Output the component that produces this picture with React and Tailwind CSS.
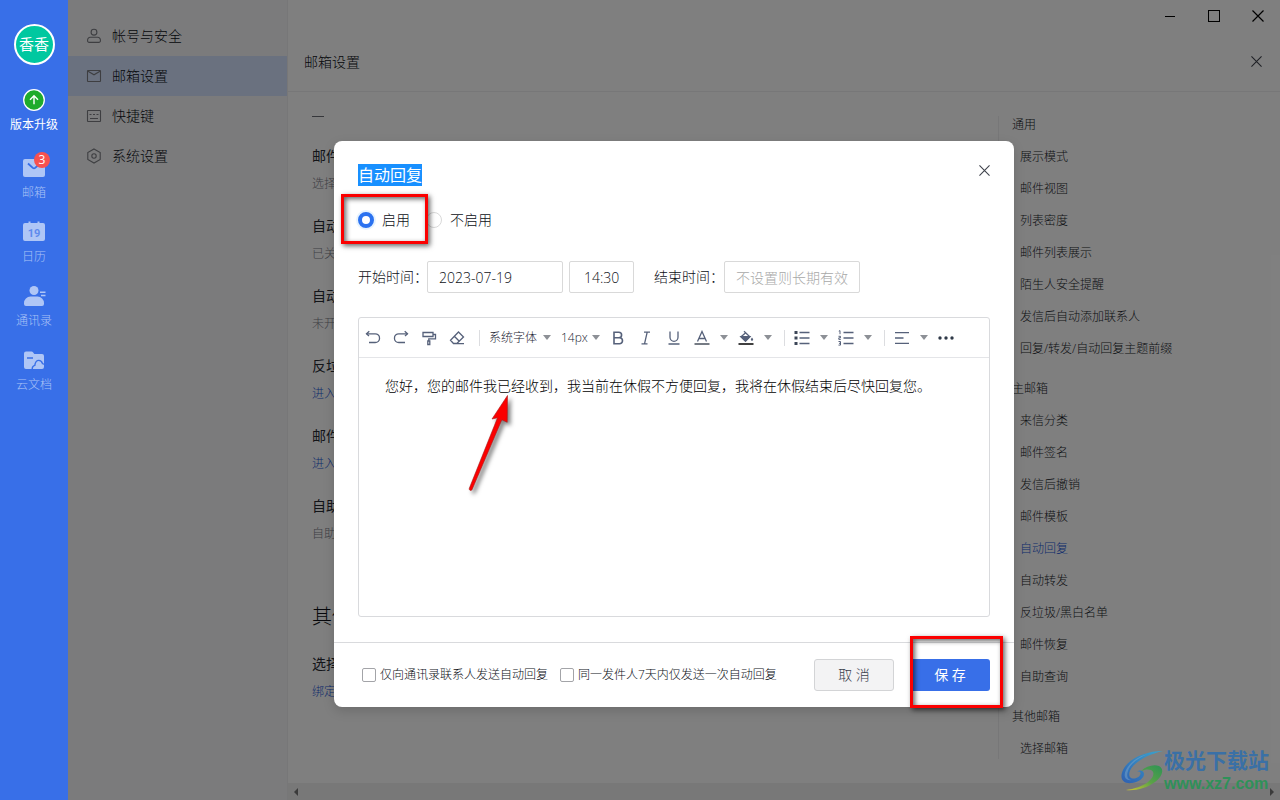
import React from "react";

const SIDE_MENU = [
  { label: "帐号与安全", icon: "user" },
  { label: "邮箱设置", icon: "mail", active: true },
  { label: "快捷键", icon: "keyboard" },
  { label: "系统设置", icon: "hex" },
];

const SETTINGS = [
  { label: "邮件模板", desc: "选择模板" },
  { label: "自动回复", desc: "已关闭" },
  { label: "自动转发", desc: "未开启" },
  { label: "反垃圾/黑白名单", desc: "进入设置", link: true },
  { label: "邮件恢复", desc: "进入设置", link: true },
  { label: "自助查询", desc: "自助查询" },
];

const ANCHORS = [
  {
    title: "通用",
    items: ["展示模式", "邮件视图", "列表密度", "邮件列表展示", "陌生人安全提醒", "发信后自动添加联系人", "回复/转发/自动回复主题前缀"],
  },
  {
    title: "主邮箱",
    items: ["来信分类", "邮件签名", "发信后撤销", "邮件模板", "自动回复", "自动转发", "反垃圾/黑白名单", "邮件恢复", "自助查询"],
  },
  { title: "其他邮箱", items: ["选择邮箱"] },
];

function MenuIcon({ name }) {
  return (
    <svg className="size-4 shrink-0" viewBox="0 0 16 16" fill="none" stroke="#7c7d83" strokeWidth="1.1">
      {name === "user" && (
        <>
          <circle cx="8" cy="4.2" r="2.9" />
          <path d="M4.2 9.3h7.6a2.6 2.6 0 0 1 2.6 2.6v1a1.5 1.5 0 0 1-1.5 1.5H3.1a1.5 1.5 0 0 1-1.5-1.5v-1a2.6 2.6 0 0 1 2.6-2.6z" />
        </>
      )}
      {name === "mail" && (
        <>
          <rect x="1.5" y="2.5" width="13" height="11" rx="0.5" />
          <path d="M2 3.2l6 3.600L14 3.200" />
        </>
      )}
      {name === "keyboard" && (
        <>
          <rect x="1.5" y="2.5" width="13" height="11" rx="0.5" />
          <path d="M3.500 6.500h2M7 6.500h2M10.500 6.500h2M4 10.500h8" />
        </>
      )}
      {name === "hex" && (
        <>
          <path d="M8 1l6.200 3.500v7L8 15l-6.200-3.500v-7z" />
          <circle cx="8" cy="8" r="2.200" />
        </>
      )}
    </svg>
  );
}

function Cross({ className }) {
  return (
    <svg className={className} viewBox="0 0 12 12" fill="none" stroke="currentColor" strokeWidth="1.2">
      <path d="M0.500 0.500l11 11M11.500 0.500l-11 11" />
    </svg>
  );
}

function RailItem({ label, children }) {
  return (
    <a href="#" className="relative flex flex-col items-center gap-[5px] text-[#a9c2f6]">
      <svg className="size-6" viewBox="0 0 24 24">{children}</svg>
      <span className="text-xs leading-4">{label}</span>
    </a>
  );
}

function Rail() {
  return (
    <nav className="flex w-[68px] shrink-0 flex-col items-center bg-[#386fe8] pt-6">
      <button className="flex size-[41px] items-center justify-center rounded-full border-2 border-white bg-[#00c8a0] text-[15px] font-normal text-white">
        香香
      </button>
      <a href="#" className="mt-[23px] flex flex-col items-center gap-[5px] text-white">
        <svg className="size-6" viewBox="0 0 24 24" fill="none" stroke="#fff">
          <circle cx="12" cy="12" r="10.300" fill="#1fab2c" strokeWidth="1.300" />
          <path d="M12 16.300V8M8 11.800l4-4 4 4" strokeWidth="1.400" />
        </svg>
        <span className="text-xs font-normal leading-4">版本升级</span>
      </a>
      <div className="mt-[23px] flex flex-col items-center gap-[19px]">
        <div className="relative">
          <RailItem label="邮箱">
            <rect x="1" y="3" width="22" height="18" rx="2" fill="#afc6f6" />
            <path d="M6 7.500l4.800 4.400a1.800 1.800 0 0 0 2.400 0L18 7.500" fill="none" stroke="#386fe8" strokeWidth="1.800" />
          </RailItem>
          <span className="absolute -right-1 -top-1 flex size-4 items-center justify-center rounded-full bg-[#f7514f] text-xs font-normal text-white">
            3
          </span>
        </div>
        <RailItem label="日历">
          <path d="M3 3h3.500V1.500h2V3h7V1.500h2V3H21a2 2 0 0 1 2 2v14a2 2 0 0 1-2 2H3a2 2 0 0 1-2-2V5a2 2 0 0 1 2-2z" fill="#afc6f6" />
          <text x="12" y="17" textAnchor="middle" fontSize="11" fontWeight="700" fontFamily="Roboto, sans-serif" fill="#5f8bed">
            19
          </text>
        </RailItem>
        <RailItem label="通讯录">
          <g fill="#afc6f6">
            <circle cx="12" cy="6.500" r="4.500" />
            <path d="M8.500 12.500h7A6.500 6.500 0 0 1 22 19v1a2 2 0 0 1-2 2H4a2 2 0 0 1-2-2v-1a6.500 6.500 0 0 1 6.500-6.500z" />
            <path d="M18 7.500h5.500V9H18zM19 10.700h4.500v1.500H19z" />
          </g>
        </RailItem>
        <RailItem label="云文档">
          <path d="M4 3.500h5.500a2 2 0 0 1 1.500.8l1.300 1.700H20a2 2 0 0 1 2 2v11a2 2 0 0 1-2 2H4a2 2 0 0 1-2-2v-13.500a2 2 0 0 1 2-2z" fill="#afc6f6" />
          <path d="M5 10h6M10.500 22c-.8-2 .2-4.200 2.300-4.600.4-3 2-5 4-5 2.400 0 3.200 1.500 3.700 3.200.8.100 1.500.500 2 1" fill="none" stroke="#386fe8" strokeWidth="1.400" />
        </RailItem>
      </div>
    </nav>
  );
}

function Caret() {
  return (
    <svg className="h-[5px] w-2" viewBox="0 0 8 5">
      <path d="M0 0h8L4 5z" fill="#8d9096" />
    </svg>
  );
}

function Tool({ label, children }) {
  return (
    <button aria-label={label} className="flex h-7 w-7 shrink-0 items-center justify-center">
      <svg className="size-4" viewBox="0 0 16 16" fill="none" stroke="#56617a" strokeWidth="1.300">
        {children}
      </svg>
    </button>
  );
}

function More({ label }) {
  return (
    <button aria-label={label} className="flex h-7 w-4 shrink-0 items-center justify-center">
      <Caret />
    </button>
  );
}

function Toolbar() {
  return (
    <div className="flex h-10 items-center border-b border-[#e4e5e8] text-xs text-[#1c2433]">
      <Tool label="撤销">
        <path d="M1.500 3.800h8.700a4.200 4.200 0 0 1 0 8.700H4" />
        <path d="M4.300 1.300L1.500 3.800l2.500 2.300" />
      </Tool>
      <Tool label="重做">
        <path d="M14.500 3.800H5.800a4.200 4.200 0 0 0 0 8.700H12" />
        <path d="M11.700 1.300l2.800 2.500-2.500 2.300" />
      </Tool>
      <Tool label="格式刷">
        <path d="M2 2.500h10v4H2zM12 4.500h2.500v4.300H7.800V11M6.800 11h2v3.500h-2z" />
      </Tool>
      <Tool label="清除格式">
        <path d="M9.500 2l5 5-6.700 6.500H4.500L1.500 10.300zM5.300 6.300l5 5M5 13.600h10" />
      </Tool>
      <span className="ml-2 mr-2 h-4 w-px bg-[#dcdde0]" />
      <span className="relative flex h-7 w-[72px] items-center">
        <select aria-label="字体" className="w-full appearance-none bg-transparent pl-px outline-none">
          <option>系统字体</option>
        </select>
        <span className="pointer-events-none absolute right-[9px]"><Caret /></span>
      </span>
      <span className="relative flex h-7 w-11 items-center">
        <select aria-label="字号" className="w-full appearance-none bg-transparent pl-px outline-none">
          <option>14px</option>
        </select>
        <span className="pointer-events-none absolute right-1"><Caret /></span>
      </span>
      <Tool label="加粗">
        <path d="M4 2.200h4.800a2.800 2.800 0 0 1 0 5.600H4zM4 7.800h5.500a3 3 0 0 1 0 6H4z" strokeWidth="1.600" />
      </Tool>
      <Tool label="斜体">
        <path d="M6 2.200h6M3.500 13.800h6M9.200 2.200L6.500 13.800" />
      </Tool>
      <Tool label="下划线">
        <path d="M4 1.500v5.800a4 4 0 0 0 8 0V1.500M2.500 14h11" />
      </Tool>
      <Tool label="文字颜色">
        <path d="M3.500 11.500L8 1.500l4.500 10M5 8.500h6" />
        <path d="M0.500 14h15" stroke="#2b3442" />
      </Tool>
      <More label="更多文字颜色" />
      <Tool label="背景颜色">
        <path d="M6 1.200l5.800 5.500L7.500 11 3 6.700 8 2.500" />
        <path d="M3 6.700h8.800L7.500 11z" fill="#56617a" />
        <path d="M14 7.500c.8 1 1.200 1.600 1.200 2.100a1.200 1.200 0 0 1-2.400 0c0-.500.400-1.100 1.200-2.100z" fill="#56617a" stroke="none" />
        <path d="M0.500 14h15" stroke="#111" strokeWidth="1.600" />
      </Tool>
      <More label="更多背景颜色" />
      <span className="ml-2 mr-[3px] h-4 w-px bg-[#dcdde0]" />
      <Tool label="无序列表">
        <path d="M5.500 2.500h10M5.500 8h10M5.500 13.500h10" />
        <path d="M0.500 1h3v3h-3zM0.500 6.500h3v3h-3zM0.500 12h3v3h-3z" fill="#3c4657" stroke="none" />
      </Tool>
      <More label="更多无序列表" />
      <Tool label="有序列表">
        <path d="M5.500 2.500h10M5.500 8h10M5.500 13.500h10" />
        <path d="M0.800 1.200l1.200-.6v3.600M0.500 6.300h2v1.500h-1.700v1.600h2M0.500 11.500h2v3.600h-2M1 13.300h1.500" strokeWidth="1" />
      </Tool>
      <More label="更多有序列表" />
      <span className="ml-2 mr-[3px] h-4 w-px bg-[#dcdde0]" />
      <Tool label="对齐">
        <path d="M1 2.700h14M1 8h8.500M1 13.300h14" />
      </Tool>
      <More label="更多对齐" />
      <Tool label="更多">
        <g fill="#2f3948" stroke="none">
          <circle cx="2" cy="8" r="1.700" />
          <circle cx="8" cy="8" r="1.700" />
          <circle cx="14" cy="8" r="1.700" />
        </g>
      </Tool>
    </div>
  );
}

const radioClass =
  "size-4 shrink-0 appearance-none rounded-full border border-[#d9d9d9] bg-white checked:border-4 checked:border-[#2b72f0] checked:ring-2 checked:ring-[#e6f3ff]";
const checkClass = "size-[14px] shrink-0 appearance-none rounded-[2px] border border-[#a3a4a8] bg-white";
const fieldClass = "h-8 rounded-[2px] border border-[#d9d9d9] bg-white text-sm outline-none placeholder:text-[#a8a8a8]";
const markClass =
  "pointer-events-none absolute border-[3px] border-[#fb0000] shadow-[2px_2px_5px_rgba(0,0,0,0.6),inset_2px_2px_5px_rgba(0,0,0,0.6)]";

function AutoReplyDialog() {
  return (
    <section role="dialog" aria-label="自动回复" className="relative w-[680px] rounded-lg bg-white text-sm text-[#0c0f16] shadow-[0_4px_12px_rgba(0,0,0,0.15)]">
      <div className="px-6 pt-[23px]">
        <header className="flex items-start justify-between">
          <h2 className="bg-[#1890ff] text-base font-normal leading-[22px] text-white">自动回复</h2>
          <button aria-label="关闭" className="-mr-1 -mt-1 flex size-5 items-center justify-center text-[#3f434c]">
            <Cross className="size-[11px]" />
          </button>
        </header>
        <div className="mt-[23px] flex h-[22px] items-center gap-4">
          <label className="flex items-center gap-2">
            <input type="radio" name="reply" defaultChecked className={radioClass} />启用
          </label>
          <label className="flex items-center gap-2">
            <input type="radio" name="reply" className={radioClass} />不启用
          </label>
        </div>
        <div className="mt-[30px] flex items-center whitespace-nowrap">
          <label htmlFor="start-date" className="w-[69px]">开始时间：</label>
          <input id="start-date" defaultValue="2023-07-19" className={fieldClass + " w-[136px] px-[11px]"} />
          <input aria-label="开始时刻" defaultValue="14:30" className={fieldClass + " ml-[6px] w-[65px] pl-[14px]"} />
          <label htmlFor="end-date" className="ml-5 w-[70px]">结束时间：</label>
          <input id="end-date" placeholder="不设置则长期有效" className={fieldClass + " w-[136px] px-[11px]"} />
        </div>
        <div className="mt-6 rounded-[3px] border border-[#d9dadd]">
          <Toolbar />
          <textarea
            aria-label="回复内容"
            defaultValue="您好，您的邮件我已经收到，我当前在休假不方便回复，我将在休假结束后尽快回复您。"
            className="block h-[258px] w-full resize-none bg-transparent px-[26px] pt-[17px] leading-[22px] text-black outline-none"
          />
        </div>
      </div>
      <footer className="mt-[25px] flex h-[65px] items-center justify-between border-t border-[#d9dadd] pl-7 pr-6">
        <div className="flex gap-3 text-xs">
          <label className="flex items-center gap-1">
            <input type="checkbox" className={checkClass} />仅向通讯录联系人发送自动回复
          </label>
          <label className="flex items-center gap-1">
            <input type="checkbox" className={checkClass} />同一发件人7天内仅发送一次自动回复
          </label>
        </div>
        <div className="flex gap-4">
          <button className="h-8 w-20 rounded-[3px] border border-[#d3d4d6] bg-[#f3f3f4] text-[#3a404c]">取 消</button>
          <button className="h-8 w-20 rounded-[3px] bg-[#386fe8] font-normal text-white">保 存</button>
        </div>
      </footer>
      <div className={markClass + " left-[7px] top-[53px] h-[50px] w-[87px]"} />
      <div className={markClass + " -bottom-px right-[11px] h-[72px] w-[93px]"} />
      <svg className="pointer-events-none absolute left-[126px] top-[249px] h-[110px] w-[60px] drop-shadow-[3px_3px_2px_rgba(0,0,0,0.5)]" viewBox="0 0 60 110">
        <path d="M47.500 5.500L32 29l5.500-1.200L9.300 98.300a1.500 1.500 0 0 0 2.800 1.200L41.800 29.800l5.400 2.500z" fill="#fb0000" stroke="#a51a1a" strokeWidth="0.600" />
      </svg>
    </section>
  );
}

function Watermark() {
  return (
    <div className="pointer-events-none absolute bottom-[7px] right-[11px] flex items-center">
      <svg className="h-[42px] w-[43px]" viewBox="0 0 43 42">
        <defs>
          <linearGradient id="wm-blue" x1="0" y1="1" x2="1" y2="0">
            <stop offset="0" stopColor="#2f5fb0" />
            <stop offset="1" stopColor="#3aa5cf" />
          </linearGradient>
          <linearGradient id="wm-green" x1="1" y1="0" x2="0" y2="1">
            <stop offset="0" stopColor="#2d9355" />
            <stop offset="0.500" stopColor="#5aa247" />
            <stop offset="1" stopColor="#d2c72e" />
          </linearGradient>
        </defs>
        <path d="M42 1C25 1 8 8 2 20c-4 9 0 14 9 13 7-1 12-5 12-9 0-3-4-5-7-2 2-1 4 0 3.500 2-.7 3-5 5-8 4.500-5-1-4-8 1-13C19 9 29 4 42 1z" fill="url(#wm-blue)" />
        <path d="M27 4C17 8 9 14 7 21c-2 6 0 9 4 9-7 1-9-4-6-10C9 12 18 6 27 4z" fill="#7ca6c9" opacity="0.500" />
        <path d="M20 21c5-5 13-7 18-5 6 3 3 11-4 16-8 6-19 9-29 8 8-1 17-4 22-8 6-5 7-10 3-12-3-1-6-.5-10 1z" fill="url(#wm-green)" />
      </svg>
      <div className="flex flex-col gap-[3px]">
        <span className="text-[21px] font-bold leading-6 text-[#3a70a6]">极光下载站</span>
        <span className="font-['Liberation_Sans',sans-serif] text-base font-bold leading-[18px] text-[#2f9159]">www.xz7.com</span>
      </div>
    </div>
  );
}

export default function App() {
  return (
    <div className="flex min-h-screen font-['Open_Sans','Noto_Sans_CJK_SC',sans-serif] font-light">
      <Rail />
      <div className="relative flex min-w-0 flex-1">
        <aside className="w-[220px] shrink-0 border-r border-[#eeeff1] bg-[#f6f7f9] pt-4">
          {SIDE_MENU.map((m) => (
            <a
              key={m.label}
              href="#"
              className={"flex h-10 items-center gap-[10px] pl-[18px] text-sm text-[#0c0f16] " + (m.active ? "bg-[#d4e3ff]" : "")}
            >
              <MenuIcon name={m.icon} />
              {m.label}
            </a>
          ))}
        </aside>
        <main className="flex min-w-0 flex-1 flex-col bg-white">
          <div className="flex h-8 items-center justify-end gap-8 pr-4 text-black">
            <button aria-label="最小化" className="flex size-3 items-center justify-center">
              <span className="h-px w-[10px] bg-black" />
            </button>
            <button aria-label="最大化" className="size-3 border border-black" />
            <button aria-label="关闭窗口"><Cross className="size-3" /></button>
          </div>
          <header className="flex h-[60px] items-center justify-between border-b border-[#eeeff1] pl-4 pr-[18px] text-sm text-[#0c0f16]">
            <h1>邮箱设置</h1>
            <button aria-label="关闭设置" className="text-[#3f434c]"><Cross className="size-[11px]" /></button>
          </header>
          <div className="flex flex-1 justify-between pt-6">
            <div className="pl-6">
              <div className="h-[29px]"><div className="h-px w-3 bg-[#6c6f77]" /></div>
              <div className="flex flex-col gap-[21px]">
                {SETTINGS.map((s) => (
                  <div key={s.label} className="flex flex-col gap-[7px]">
                    <span className="text-sm font-normal leading-[22px] text-[#262a33]">{s.label}</span>
                    <span className={"text-xs leading-5 " + (s.link ? "text-[#2458d8]" : "text-[#7d8088]")}>{s.desc}</span>
                  </div>
                ))}
              </div>
              <h2 className="mt-[59px] text-xl leading-7 text-[#0c0f16]">其他邮箱</h2>
              <div className="mt-[22px] flex flex-col gap-[7px]">
                <span className="text-sm font-normal leading-[22px] text-[#262a33]">选择邮箱</span>
                <a href="#" className="text-xs leading-5 text-[#2458d8]">绑定邮箱</a>
              </div>
            </div>
            <nav className="mb-6 flex w-[282px] flex-col gap-6 border-l border-[#eeeff1] pl-[13px] pt-px text-xs leading-4 text-[#1a1e2b]">
              {ANCHORS.map((g) => (
                <div key={g.title} className="flex flex-col gap-4">
                  <span>{g.title}</span>
                  {g.items.map((t) => (
                    <a key={t} href="#" className={"pl-2 " + (g.title === "主邮箱" && t === "自动回复" ? "text-[#2458d8]" : "")}>
                      {t}
                    </a>
                  ))}
                </div>
              ))}
            </nav>
          </div>
          <div className="flex h-[17px] items-center justify-between bg-[#f1f1f1] px-[6px]">
            <svg className="h-2 w-1" viewBox="0 0 4 8"><path d="M4 0v8L0 4z" fill="#777" /></svg>
            <svg className="h-2 w-1" viewBox="0 0 4 8"><path d="M0 0v8l4-4z" fill="#777" /></svg>
          </div>
        </main>
        <div className="absolute inset-0 flex items-center justify-center bg-black/50 pt-12">
          <AutoReplyDialog />
        </div>
        <Watermark />
      </div>
    </div>
  );
}
